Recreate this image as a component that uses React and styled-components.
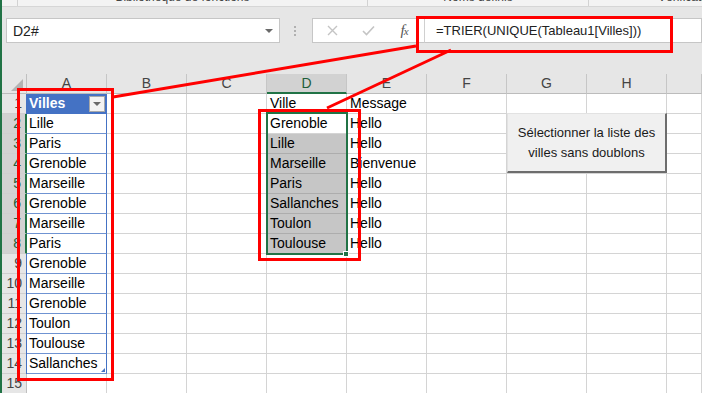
import styled, { createGlobalStyle } from 'styled-components';

const GlobalStyle = createGlobalStyle`
  html, body {
    margin: 0;
    padding: 0;
    background: #e6e6e6;
    overflow: hidden;
  }
  body {
    font-family: 'Liberation Sans', Arial, sans-serif;
  }
`;

const COLUMNS = ['A', 'B', 'C', 'D', 'E', 'F', 'G', 'H'];

const ROWS = [
  { a: 'Villes', d: 'Ville', e: 'Message' },
  { a: 'Lille', d: 'Grenoble', e: 'Hello' },
  { a: 'Paris', d: 'Lille', e: 'Hello' },
  { a: 'Grenoble', d: 'Marseille', e: 'Bienvenue' },
  { a: 'Marseille', d: 'Paris', e: 'Hello' },
  { a: 'Grenoble', d: 'Sallanches', e: 'Hello' },
  { a: 'Marseille', d: 'Toulon', e: 'Hello' },
  { a: 'Paris', d: 'Toulouse', e: 'Hello' },
  { a: 'Grenoble' },
  { a: 'Marseille' },
  { a: 'Grenoble' },
  { a: 'Toulon' },
  { a: 'Toulouse' },
  { a: 'Sallanches' },
  {},
];

export default function App() {
  return (
    <>
      <GlobalStyle />
      <Window>
        <GreenEdge />
        <RibbonStrip>
          <Group $w={16} />
          <Group $w={350} $padRight={20}>
            <GroupLabel>Bibliothèque de fonctions</GroupLabel>
          </Group>
          <Group $w={221}>
            <GroupLabel>Noms définis</GroupLabel>
          </Group>
          <Group $w={200} $left>
            <GroupLabel>Vérification des formules</GroupLabel>
          </Group>
        </RibbonStrip>

        <FormulaRow>
          <NameBox>
            D2#
            <DropArrow />
          </NameBox>
          <Grip>
            <span />
            <span />
            <span />
          </Grip>
          <FxBox>
            <FxSlot>
              <svg width="11" height="11" viewBox="0 0 11 11">
                <path d="M1 1L10 10M10 1L1 10" stroke="#c4c4c4" strokeWidth="1.4" fill="none" />
              </svg>
            </FxSlot>
            <FxSlot>
              <svg width="13" height="11" viewBox="0 0 13 11">
                <path d="M1 6L4.5 9.5L12 1.5" stroke="#c4c4c4" strokeWidth="1.6" fill="none" />
              </svg>
            </FxSlot>
            <FxSlot>
              <FxLabel>
                f<small>x</small>
              </FxLabel>
            </FxSlot>
          </FxBox>
          <FormulaInput>=TRIER(UNIQUE(Tableau1[Villes]))</FormulaInput>
        </FormulaRow>

        <Sheet>
          <HeaderRow>
            <Corner />
            {COLUMNS.map((c) => (
              <ColHead key={c} $sel={c === 'D'}>
                {c}
              </ColHead>
            ))}
            <ColHead $fill />
          </HeaderRow>

          {ROWS.map((r, i) => {
            const n = i + 1;
            const sel = n >= 2 && n <= 8;
            const aKind = n === 1 ? 'th' : n <= 14 ? 'tb' : undefined;
            const dKind = n >= 3 && n <= 8 ? 'shade' : undefined;
            return (
              <Row key={n}>
                <RowHead $sel={sel}>{n}</RowHead>
                <Cell $kind={aKind} $edge={!sel && n <= 14} $corner={n === 14}>
                  {r.a}
                  {n === 1 && (
                    <FilterBtn>
                      <DropArrow />
                    </FilterBtn>
                  )}
                </Cell>
                <Cell />
                <Cell />
                <Cell $kind={dKind}>{r.d}</Cell>
                <Cell>{r.e}</Cell>
                <Cell />
                <Cell />
                <Cell />
                <Cell $fill />
              </Row>
            );
          })}
        </Sheet>

        <Selection>
          <FillHandle />
        </Selection>

        <MacroButton>
          Sélectionner la liste des
          <br />
          villes sans doublons
        </MacroButton>

        <Annotations width="702" height="393" viewBox="0 0 702 393">
          <g stroke="#ff0000" strokeWidth="3" fill="none">
            <rect x="18.5" y="89.5" width="94" height="290" />
            <rect x="259.5" y="110.5" width="100" height="149" />
            <rect x="417.5" y="17.5" width="254" height="34" />
            <line x1="113" y1="97" x2="416" y2="46" />
            <line x1="327" y1="108" x2="451" y2="50" />
          </g>
        </Annotations>
      </Window>
    </>
  );
}

const Window = styled.div`
  position: relative;
  width: 702px;
  height: 393px;
  padding-left: 2px;
  box-sizing: border-box;
  overflow: hidden;
  background: #e6e6e6;
`;

const GreenEdge = styled.div`
  position: absolute;
  left: 0;
  top: 0;
  bottom: 0;
  width: 2px;
  background: #217346;
  z-index: 6;
`;

const RibbonStrip = styled.div`
  display: flex;
  height: 6px;
  margin-left: -2px;
  padding-left: 2px;
  background: #f3f3f3;
  border-bottom: 1px solid #d6d6d6;
  overflow: hidden;
`;

const Group = styled.div`
  flex: none;
  width: ${(p) => p.$w}px;
  box-sizing: border-box;
  border-right: 1px solid #d2d2d2;
  padding-right: ${(p) => p.$padRight || 0}px;
  padding-left: ${(p) => (p.$left ? 69 : 0)}px;
  text-align: ${(p) => (p.$left ? 'left' : 'center')};
`;

const GroupLabel = styled.div`
  margin-top: -9px;
  font-size: 12px;
  line-height: 13px;
  color: #444;
  white-space: nowrap;
`;

const FormulaRow = styled.div`
  display: flex;
  height: 25px;
  margin-top: 11px;
  padding-left: 4px;
`;

const NameBox = styled.div`
  flex: none;
  width: 274px;
  box-sizing: border-box;
  display: flex;
  align-items: center;
  justify-content: space-between;
  padding: 0 6px;
  background: #fff;
  border: 1px solid #c6c6c6;
  font-size: 14px;
  color: #222;
`;

const DropArrow = styled.span`
  width: 0;
  height: 0;
  border-left: 4px solid transparent;
  border-right: 4px solid transparent;
  border-top: 4px solid #6a6a6a;
`;

const Grip = styled.div`
  flex: none;
  width: 2px;
  margin: 0 16px 0 14px;
  display: flex;
  flex-direction: column;
  justify-content: center;
  gap: 2px;

  span {
    width: 2px;
    height: 2px;
    background: #b0b0b0;
  }
`;

const FxBox = styled.div`
  flex: none;
  width: 113px;
  box-sizing: border-box;
  display: flex;
  align-items: center;
  padding-left: 1px;
  background: #fff;
  border: 1px solid #c6c6c6;
  border-right-color: #d0d0d0;
`;

const FxSlot = styled.div`
  width: 36px;
  display: flex;
  justify-content: center;
  align-items: center;
`;

const FxLabel = styled.span`
  font-family: 'Liberation Serif', 'Times New Roman', serif;
  font-style: italic;
  font-size: 15px;
  color: #555;
  letter-spacing: -1px;

  small {
    font-size: 11px;
  }
`;

const FormulaInput = styled.div`
  flex: 1;
  display: flex;
  align-items: center;
  padding-left: 11px;
  background: #fff;
  border: 1px solid #c6c6c6;
  border-left: none;
  font-size: 13px;
  color: #222;
  white-space: nowrap;
`;

const Sheet = styled.div`
  margin-top: 31px;
`;

const HeaderRow = styled.div`
  display: flex;
  height: 20px;
`;

const Corner = styled.div`
  position: relative;
  flex: none;
  width: 25px;
  box-sizing: border-box;
  border-right: 1px solid #c0c0c0;
  border-bottom: 1px solid #bcbcbc;

  &::after {
    content: '';
    position: absolute;
    right: 3px;
    bottom: 2px;
    width: 0;
    height: 0;
    border-left: 12px solid transparent;
    border-bottom: 12px solid #b4b4b4;
  }
`;

const ColHead = styled.div`
  flex: ${(p) => (p.$fill ? 1 : 'none')};
  width: ${(p) => (p.$fill ? 'auto' : '80px')};
  box-sizing: border-box;
  text-align: center;
  font-size: 14px;
  line-height: 19px;
  color: ${(p) => (p.$sel ? '#1e5e3a' : '#444')};
  background: ${(p) => (p.$sel ? '#d2d2d2' : 'transparent')};
  border-right: 1px solid #c6c6c6;
  border-bottom: ${(p) => (p.$sel ? '2px solid #217346' : '1px solid #bcbcbc')};
`;

const Row = styled.div`
  display: flex;
  height: 20px;
`;

const RowHead = styled.div`
  flex: none;
  width: 25px;
  box-sizing: border-box;
  padding-right: 4px;
  text-align: right;
  font-size: 14px;
  line-height: 19px;
  color: ${(p) => (p.$sel ? '#1e5e3a' : '#444')};
  background: ${(p) => (p.$sel ? '#d2d2d2' : '#e6e6e6')};
  border-bottom: 1px solid #cfcfcf;
  border-right: ${(p) => (p.$sel ? '2px solid #217346' : '1px solid #c0c0c0')};
`;

const cellKinds = {
  th: `
    background: #4472c4;
    color: #fff;
    font-weight: bold;
    padding-left: 2px;
    border-right-color: #4472c4;
    border-bottom-color: #4472c4;
  `,
  tb: `
    background: #fff;
    padding-left: 2px;
    border-right-color: #4472c4;
    border-bottom-color: #6f93d2;
  `,
  shade: `
    background: #c6c6c6;
    border-bottom-color: #adadad;
  `,
};

const Cell = styled.div`
  position: relative;
  flex: ${(p) => (p.$fill ? 1 : 'none')};
  width: ${(p) => (p.$fill ? 'auto' : '80px')};
  box-sizing: border-box;
  display: flex;
  align-items: center;
  justify-content: space-between;
  padding-left: 3px;
  background: #fff;
  border-right: 1px solid #d4d4d4;
  border-bottom: 1px solid #d4d4d4;
  font-size: 14px;
  line-height: 19px;
  color: #000;
  white-space: nowrap;
  ${(p) => cellKinds[p.$kind] || ''}
  ${(p) => (p.$edge ? 'box-shadow: -1px 0 0 #4472c4;' : '')}

  ${(p) =>
    p.$corner &&
    `
    &::after {
      content: '';
      position: absolute;
      right: 1px;
      bottom: 1px;
      width: 0;
      height: 0;
      border-left: 4px solid transparent;
      border-bottom: 4px solid #4472c4;
    }
  `}
`;

const FilterBtn = styled.div`
  width: 16px;
  height: 16px;
  margin-right: 1px;
  box-sizing: border-box;
  display: flex;
  align-items: center;
  justify-content: center;
  background: #f3f3f3;
  border: 1px solid #a8a8a8;
`;

const Selection = styled.div`
  position: absolute;
  left: 266px;
  top: 112px;
  width: 82px;
  height: 143px;
  box-sizing: border-box;
  border: 2px solid #217346;
  z-index: 2;
`;

const FillHandle = styled.div`
  position: absolute;
  right: -3px;
  bottom: -4px;
  width: 6px;
  height: 6px;
  box-sizing: border-box;
  background: #217346;
  border: 1px solid #fff;
`;

const MacroButton = styled.div`
  position: absolute;
  left: 507px;
  top: 113px;
  width: 160px;
  height: 60px;
  box-sizing: border-box;
  display: flex;
  align-items: center;
  justify-content: center;
  text-align: center;
  background: #f0f0f0;
  border-top: 1px solid #e2e2e2;
  border-left: 1px solid #e2e2e2;
  border-right: 2px solid #6d6d6d;
  border-bottom: 2px solid #6d6d6d;
  font-size: 13px;
  line-height: 20px;
  color: #1a1a1a;
  z-index: 2;
`;

const Annotations = styled.svg`
  position: absolute;
  left: 0;
  top: 0;
  pointer-events: none;
  z-index: 5;
`;
